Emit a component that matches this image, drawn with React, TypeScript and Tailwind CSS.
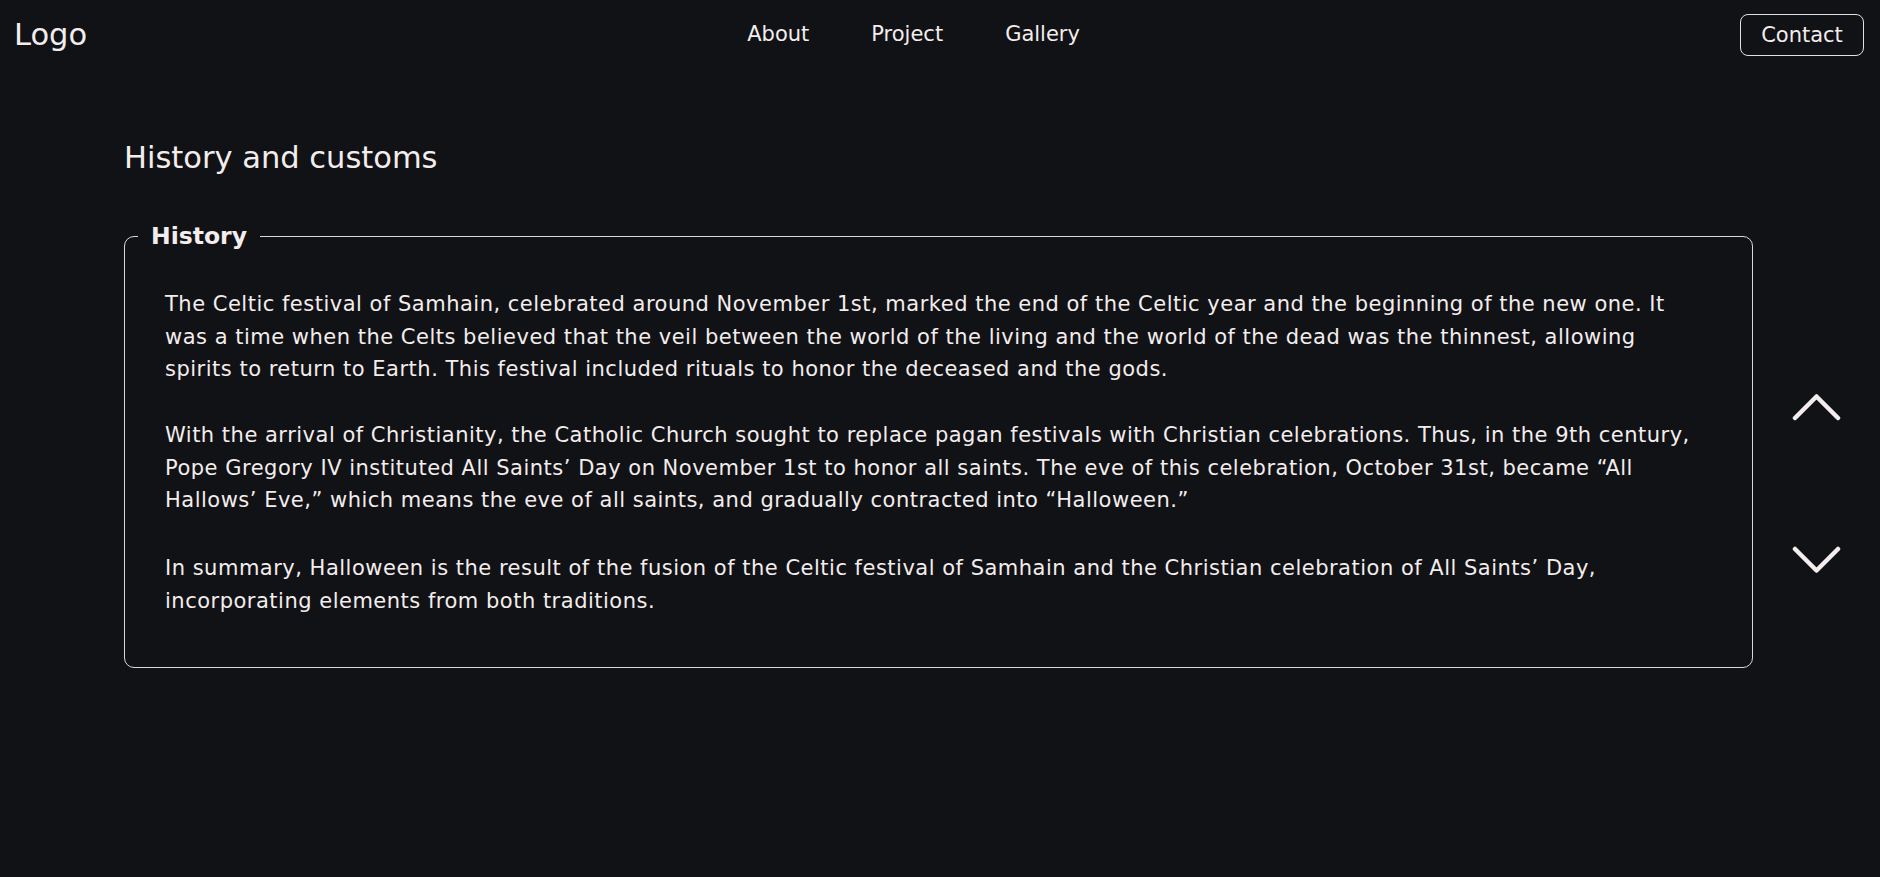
import React from "react";

const paragraphs: string[][] = [
  [
    "The Celtic festival of Samhain, celebrated around November 1st, marked the end of the Celtic year and the beginning of the new one. It",
    "was a time when the Celts believed that the veil between the world of the living and the world of the dead was the thinnest, allowing",
    "spirits to return to Earth. This festival included rituals to honor the deceased and the gods.",
  ],
  [
    "With the arrival of Christianity, the Catholic Church sought to replace pagan festivals with Christian celebrations. Thus, in the 9th century,",
    "Pope Gregory IV instituted All Saints\u2019 Day on November 1st to honor all saints. The eve of this celebration, October 31st, became \u201cAll",
    "Hallows\u2019 Eve,\u201d which means the eve of all saints, and gradually contracted into \u201cHalloween.\u201d",
  ],
  [
    "In summary, Halloween is the result of the fusion of the Celtic festival of Samhain and the Christian celebration of All Saints\u2019 Day,",
    "incorporating elements from both traditions.",
  ],
];

const gaps = ["", "mt-[32.7px]", "mt-[35px]"];

function Chevron({ up }: { up?: boolean }) {
  return (
    <svg width="49" height="28" viewBox="0 0 49 28" fill="none">
      <path
        d={up ? "M3 25 L24.5 3.5 L46 25" : "M3 3 L24.5 24.5 L46 3"}
        stroke="#f3eded"
        strokeWidth="4.5"
        strokeLinecap="round"
        strokeLinejoin="round"
      />
    </svg>
  );
}

export default function App() {
  return (
    <div
      className="min-h-[877px] w-full bg-[#111216] text-[#f3eded]"
      style={{ fontFamily: "'DejaVu Sans', Inter, sans-serif" }}
    >
      <header className="flex h-[70px] items-center justify-between pl-[14px] pr-[16px]">
        <div className="text-[30.5px] leading-none">Logo</div>
        <nav className="flex items-center gap-[62px] text-[21px]">
          <a>About</a>
          <a>Project</a>
          <a>Gallery</a>
        </nav>
        <button className="h-[42px] w-[124px] rounded-[8px] border border-[#e6dede] text-[21px] leading-none">
          Contact
        </button>
      </header>

      <main className="flex pl-[124px] pt-[65px]">
        <div className="flex-1">
          <h1 className="text-[30.5px] leading-[46px] font-normal">History and customs</h1>
          <fieldset className="mt-[40px] rounded-[10px] border border-[#dcd6d6] pl-[13px] pr-[13px]">
            <legend className="px-[13px] text-[23.5px] font-bold leading-[30px]">History</legend>
            <div className="pb-[50px] pl-[27px] pt-[37px] text-[21px] leading-[32.7px] tracking-[0.5px]">
              {paragraphs.map((lines, i) => (
                <p key={i} className={gaps[i]}>
                  {lines.map((l, j) => (
                    <span key={j} className="block whitespace-nowrap">
                      {l}
                    </span>
                  ))}
                </p>
              ))}
            </div>
          </fieldset>
        </div>
        <div className="flex w-[127px] flex-col items-center pt-[258px]">
          <Chevron up />
          <div className="h-[125px]" />
          <Chevron />
        </div>
      </main>
    </div>
  );
}
